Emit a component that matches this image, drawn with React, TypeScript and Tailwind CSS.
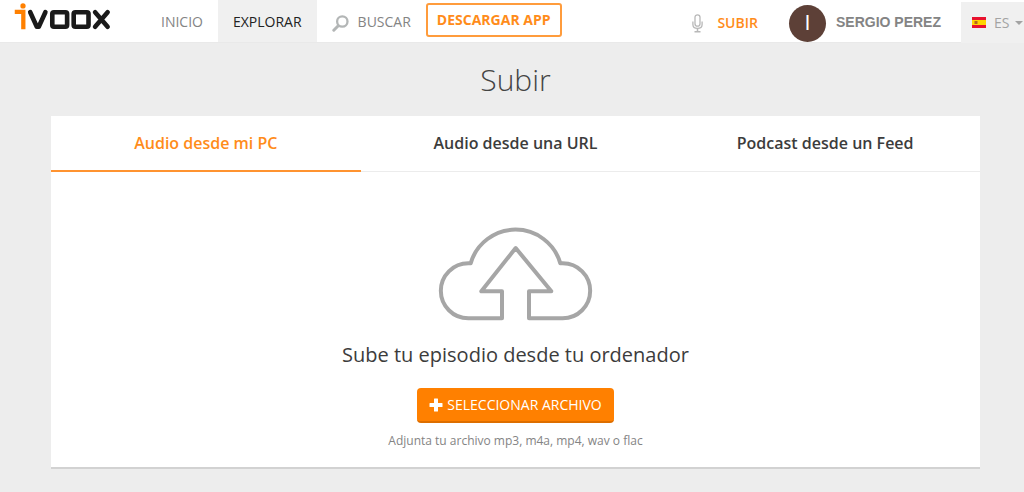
import { useState } from "react";

const tabs = ["Audio desde mi PC", "Audio desde una URL", "Podcast desde un Feed"];

function Logo() {
  return (
    <svg viewBox="42 9 292 82" className="h-[27px] w-[97px]" fill="none" strokeLinejoin="round" role="img" aria-label="ivoox">
      <circle cx="68" cy="18" r="8" fill="#ff8000" />
      <path d="M43 36H69V89" stroke="#ff8000" strokeWidth="13" strokeLinejoin="miter" />
      <g stroke="#1a1a1a" strokeWidth="14">
        <path d="M90 37L110 81H116L136 37" strokeLinecap="round" />
        <rect x="157" y="37" width="45" height="44" rx="5" />
        <rect x="222" y="37" width="45" height="44" rx="5" />
        <path d="M287 37L325 81M325 37L287 81" strokeLinecap="round" />
      </g>
    </svg>
  );
}

function SearchIcon() {
  return (
    <svg viewBox="0 0 17 17" className="mt-0.5 size-[17px]" fill="none" stroke="#b3b6b6" aria-hidden="true">
      <circle cx="10.3" cy="6.5" r="5.2" strokeWidth="2.3" />
      <path d="M6 11L1.8 15.2" strokeWidth="3" strokeLinecap="round" />
    </svg>
  );
}

function MicIcon() {
  return (
    <svg viewBox="0 0 11 19" className="h-[19px] w-[11px]" fill="none" stroke="#b8b8b8" aria-hidden="true">
      <rect x="3" y="0.8" width="5" height="11.4" rx="2.5" strokeWidth="1.3" />
      <path d="M0.9 7.5V10.5C0.9 13 2.8 14.4 5.5 14.4S10.1 13 10.1 10.5V7.5" strokeWidth="1.3" />
      <path d="M5.5 14.4V17.6M2.5 17.8H8.5" strokeWidth="1.5" />
    </svg>
  );
}

function SpainFlag() {
  return (
    <svg viewBox="0 0 14 11" className="h-[11px] w-[14px]" aria-hidden="true">
      <path fill="#e8112d" d="M0 0H14V11H0Z" />
      <path fill="#ffd400" d="M0 3H14V8H0Z" />
      <path fill="#b5651d" d="M2.5 4H5.5V7H2.5Z" />
    </svg>
  );
}

function CloudUpload() {
  return (
    <svg viewBox="51 30 471 294" className="h-[98px] w-[157px]" fill="none" stroke="#a6a6a6" strokeWidth="12" strokeLinejoin="round" aria-hidden="true">
      <path d="M246 310H145A82.5 82.5 0 0 1 145 145H152A140 140 0 0 1 421 145H428A82.5 82.5 0 0 1 428 310H327V229H394L287 99L184 229H246Z" />
    </svg>
  );
}

function Header() {
  return (
    <header className="flex h-[43px] items-start border-b border-[#e9e9e9] bg-white text-sm text-[#848484]">
      <a href="#" className="mr-[35px] ml-3.5 pt-[3px]">
        <Logo />
      </a>
      <nav className="flex h-full items-center">
        <a href="#" className="flex h-full items-center px-[15px] pt-0.5">INICIO</a>
        <a href="#" className="flex h-full items-center bg-[#f0f0f0] px-[15px] pt-0.5 text-[#222]">EXPLORAR</a>
        <a href="#" className="flex h-full items-center gap-[9px] px-[15px] pt-0.5">
          <SearchIcon />
          BUSCAR
        </a>
      </nav>
      <button className="mt-[3px] h-[34px] rounded-[3px] border-2 border-[#ff9c3c] px-[9px] font-bold text-[#ff8c1a]">
        DESCARGAR APP
      </button>
      <div className="ml-auto flex h-[46px] items-center">
        <a href="#" className="flex items-center gap-3.5 text-[#ff8c1a]">
          <MicIcon />
          <span className="font-semibold">SUBIR</span>
        </a>
        <a href="#" className="ml-[31px] flex items-center gap-2.5">
          <span className="flex size-[37px] items-center justify-center rounded-full bg-[#5d4037] font-[Roboto] text-xl text-white">
            I
          </span>
          <span className="pb-[3px] font-['Liberation_Sans',Arial,sans-serif] text-sm font-bold">SERGIO PEREZ</span>
        </a>
      </div>
      <button className="mt-0.5 ml-5 flex h-[41px] w-[63px] items-center gap-2 bg-[#f0f0f0] pl-[11px] text-[#a3a3a3]">
        <SpainFlag />
        <span className="flex items-center gap-1.5">
          ES
          <span className="border-x-4 border-t-4 border-x-transparent border-t-[#a3a3a3]" />
        </span>
      </button>
    </header>
  );
}

export default function App() {
  const [active, setActive] = useState(0);

  return (
    <div className="min-h-screen bg-[#ededed] font-['Open_Sans','Noto_Sans',sans-serif]">
      <Header />
      <main className="pr-11 pb-6 pl-[51px]">
        <h1 className="pt-[17px] pb-4 text-center text-3xl leading-10 font-light text-[#444]">Subir</h1>
        <section className="border-b-2 border-[#d2d2d2] bg-white">
          <div role="tablist" className="grid grid-cols-3 border-b border-[#ececec]">
            {tabs.map((tab, i) => (
              <button
                key={tab}
                role="tab"
                aria-selected={i === active}
                onClick={() => setActive(i)}
                className={
                  i === active
                    ? "-mb-px h-14 border-b-2 border-[#ff9330] text-base font-semibold text-[#ff8c1a]"
                    : "-mb-px h-14 border-b-2 border-transparent text-base font-semibold text-[#3c3c3c]"
                }
              >
                {tab}
              </button>
            ))}
          </div>
          <div role="tabpanel" className="flex flex-col items-center pt-[53px] pb-4">
            <CloudUpload />
            <p className="mt-4 text-xl leading-8 text-[#3c3c3c]">Sube tu episodio desde tu ordenador</p>
            <button className="mt-[17px] flex h-[35px] items-center gap-1 rounded-[4px] border-b-2 border-[#dd6e00] bg-[#ff8000] px-3 text-sm text-white">
              <svg viewBox="0 0 14 14" className="size-3.5" fill="currentColor" aria-hidden="true">
                <path d="M5 1Q5 .5 5.5 .5H8.5Q9 .5 9 1V5H13Q13.5 5 13.5 5.5V8.5Q13.5 9 13 9H9V13Q9 13.5 8.5 13.5H5.5Q5 13.5 5 13V9H1Q.5 9 .5 8.5V5.5Q.5 5 1 5H5Z" />
              </svg>
              SELECCIONAR ARCHIVO
            </button>
            <p className="mt-2 text-xs leading-5 text-[#848484]">Adjunta tu archivo mp3, m4a, mp4, wav o flac</p>
          </div>
        </section>
      </main>
    </div>
  );
}
